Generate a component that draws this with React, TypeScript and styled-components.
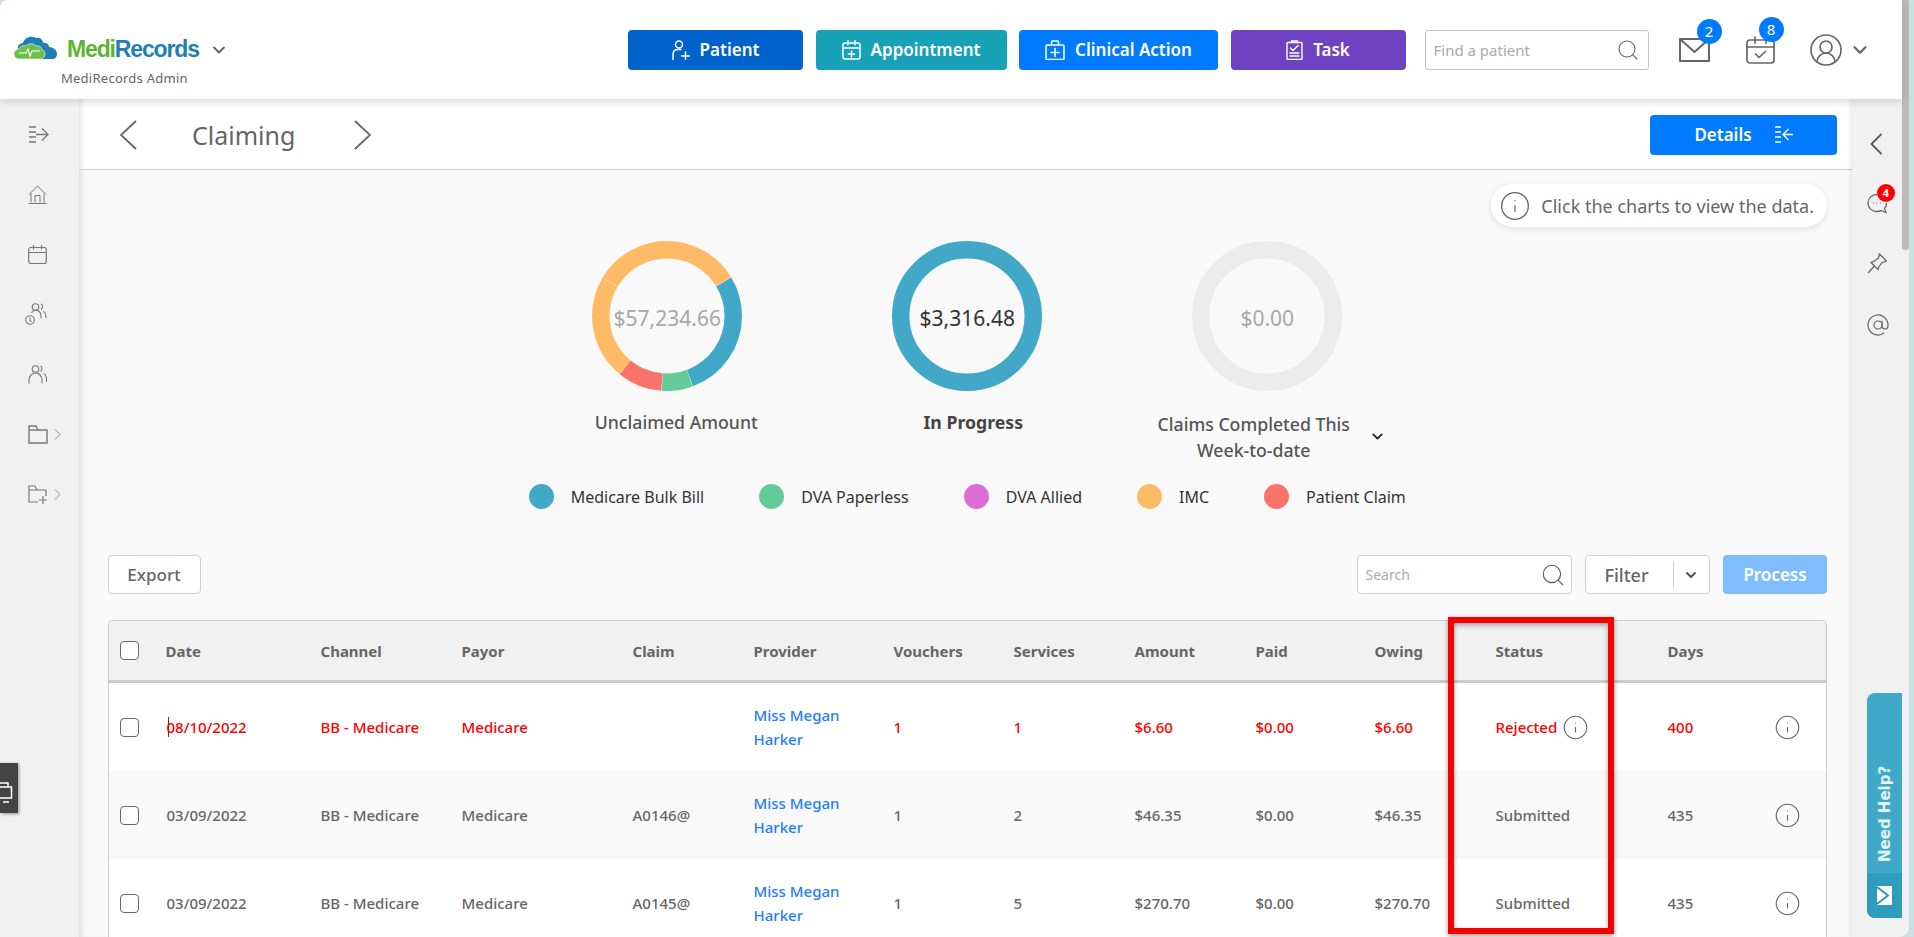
import React from "react";
import styled, { createGlobalStyle } from "styled-components";
import { ChevronDown, Info, Search, CircleUserRound, AtSign } from "lucide-react";

const GlobalStyle = createGlobalStyle`
    html, body {
        margin: 0;
        height: 100%;
        overflow: hidden;
        background: #c9e0e5;
        font-family: "Noto Sans", "Open Sans", sans-serif;
        color: #666;
    }
    * { box-sizing: border-box; }
`;

const Window = styled.div`
    display: flex;
    width: 1909px;
    height: 937px;
    overflow: hidden;
    background: #f1f1f1;
    border-radius: 8px 0 10px 0;
`;

const AppColumn = styled.div`
    display: flex;
    flex-direction: column;
    flex: 1;
    min-width: 0;
`;

const ScrollTrack = styled.div`
    width: 7px;
    background: #f1f1f1;
`;

const ScrollThumb = styled.div`
    height: 250px;
    background: #bcbcbc;
    border-radius: 0 0 3px 3px;
`;

/* top bar */
const TopBar = styled.header`
    position: relative;
    z-index: 3;
    display: flex;
    align-items: center;
    flex: none;
    height: 99px;
    padding: 0 0 0 13px;
    background: #fff;
    box-shadow: 0 2px 8px rgba(0, 0, 0, 0.16);
`;

const BrandBlock = styled.div`
    display: flex;
    flex-direction: column;
    align-self: flex-start;
    flex: none;
    width: 615px;
    padding-top: 32px;
`;

const BrandRow = styled.div`
    display: flex;
    align-items: center;
    height: 30px;
`;

const BrandName = styled.span`
    margin: 5px 0 0 10px;
    font-family: "Liberation Sans", Arial, sans-serif;
    font-size: 23px;
    font-weight: 700;
    letter-spacing: -1.15px;
    color: #1f7fb5;

    b {
        color: #5cb531;
    }
`;

const BrandChevron = styled(ChevronDown)`
    margin: 6px 0 0 10px;
    color: #666;
`;

const BrandSub = styled.span`
    margin: 7px 0 0 48px;
    font-size: 13px;
    line-height: 18px;
    letter-spacing: 0.25px;
    color: #666;
`;

const ActionGroup = styled.div`
    display: flex;
    gap: 12.5px;
`;

const ActionButton = styled.button<{ $bg: string; $width: number }>`
    display: flex;
    align-items: center;
    justify-content: center;
    gap: 10px;
    width: ${({ $width }) => $width}px;
    height: 40px;
    padding: 0;
    border: 0;
    border-radius: 4px;
    background: ${({ $bg }) => $bg};
    color: #fff;
    font-family: inherit;
    font-size: 17px;
    font-weight: 600;
`;

const FindBox = styled.div`
    display: flex;
    align-items: center;
    justify-content: space-between;
    width: 224px;
    height: 40px;
    margin-left: 19px;
    padding: 0 8px;
    border: 1px solid #c4c4c4;
    border-radius: 3px;
    font-size: 15px;
    color: #aaa;
`;

const HeaderIcons = styled.div`
    display: flex;
    align-items: center;
    margin-left: 30px;
`;

const NotifyIcon = styled.div<{ $width: number }>`
    position: relative;
    display: flex;
    width: ${({ $width }) => $width}px;
    color: #666;
`;

const NotifyBadge = styled.span`
    position: absolute;
    top: -19px;
    right: 24px;
    width: 25px;
    height: 25px;
    border-radius: 50%;
    background: #007bff;
    color: #fff;
    font-size: 15px;
    line-height: 25px;
    text-align: center;
`;

const UserChevron = styled(ChevronDown)`
    margin-left: 5px;
    color: #666;
`;

/* rails */
const Workspace = styled.div`
    display: flex;
    flex: 1;
    min-height: 0;
`;

const LeftRail = styled.nav`
    position: relative;
    display: flex;
    flex-direction: column;
    flex: none;
    width: 79px;
    padding: 26px 0 0 28px;
    gap: 41px;
    background: #f1f1f1;
    color: #777;
`;

const RailItem = styled.div<{ $nudge?: number }>`
    display: flex;
    align-items: center;
    height: 19px;
    gap: 6px;
    margin-left: ${({ $nudge }) => $nudge ?? 0}px;
    color: #777;
`;

const DeviceWidget = styled.div`
    position: absolute;
    left: 0;
    top: 664px;
    width: 18px;
    height: 50px;
    background: #444;
    box-shadow: 1px 1px 3px rgba(0, 0, 0, 0.4);
    overflow: hidden;
`;

const RightRail = styled.aside`
    position: relative;
    display: flex;
    flex-direction: column;
    align-items: flex-start;
    flex: none;
    width: 50px;
    padding: 34px 0 0 15px;
    background: #f1f1f1;
    color: #666;
    box-shadow: -2px 0 4px rgba(0, 0, 0, 0.08);
`;

const RailSlot = styled.div<{ $nudge?: number }>`
    position: relative;
    display: flex;
    height: 60px;
    margin-left: ${({ $nudge }) => $nudge ?? 0}px;
`;

const ChatBadge = styled.span`
    position: absolute;
    top: -9px;
    left: 10px;
    width: 18px;
    height: 18px;
    border-radius: 50%;
    background: #f00;
    color: #fff;
    font-size: 11px;
    font-weight: 700;
    line-height: 18px;
    text-align: center;
`;

const HelpTab = styled.div`
    position: absolute;
    left: 15px;
    top: 594px;
    display: flex;
    flex-direction: column;
    width: 35px;
    height: 225px;
    overflow: hidden;
    border-radius: 8px 0 0 8px;
    background: #40a9c8;
`;

const HelpLabel = styled.div`
    display: flex;
    align-items: center;
    justify-content: flex-start;
    flex: 1;
    padding-top: 11px;
    writing-mode: vertical-rl;
    transform: rotate(180deg);
    font-family: "DejaVu Sans", sans-serif;
    font-size: 15px;
    font-weight: 700;
    color: #e4f3f7;
`;

const HelpMail = styled.div`
    display: flex;
    align-items: center;
    justify-content: center;
    flex: none;
    height: 45px;
    background: #2e9cbc;
`;

/* main */
const Main = styled.main`
    display: flex;
    flex-direction: column;
    flex: 1;
    min-width: 0;
    overflow: hidden;
    background: #f9f9f9;
    box-shadow: inset 6px 0 6px -4px rgba(0, 0, 0, 0.12);
`;

const TitleBar = styled.div`
    display: flex;
    align-items: center;
    flex: none;
    height: 71px;
    padding: 1px 15px 0 41px;
    background: #fff;
    border-bottom: 1px solid #ccc;
    box-shadow: inset 6px 0 6px -4px rgba(0, 0, 0, 0.12);
`;

const PageTitle = styled.h1`
    width: 104px;
    margin: 0 58px 0 55px;
    font-size: 25px;
    font-weight: 400;
    color: #666;
`;

const DetailsButton = styled.button`
    display: flex;
    align-items: center;
    justify-content: center;
    gap: 22px;
    width: 187px;
    height: 40px;
    margin-left: auto;
    padding: 0;
    border: 0;
    border-radius: 4px;
    background: #007bff;
    color: #fff;
    font-family: inherit;
    font-size: 17px;
    font-weight: 600;
`;

const Content = styled.div`
    display: flex;
    flex-direction: column;
    flex: 1;
    padding: 14px 25px 0 28.5px;
`;

const HintPill = styled.div`
    display: flex;
    align-items: center;
    align-self: flex-end;
    gap: 10px;
    height: 43px;
    padding: 0 13px 0 8px;
    border-radius: 22px;
    background: #fff;
    box-shadow: 0 2px 6px rgba(0, 0, 0, 0.1);
    font-size: 18px;
    color: #666;
`;

const ChartRow = styled.div`
    display: flex;
    justify-content: center;
    margin-top: 14px;
`;

const ChartItem = styled.div`
    display: flex;
    flex-direction: column;
    align-items: center;
    width: 300px;
`;

const Ring = styled.div`
    position: relative;
    width: 150px;
    height: 150px;

    svg {
        display: block;
    }
`;

const RingValue = styled.span<{ $dark?: boolean }>`
    position: absolute;
    inset: 0;
    display: flex;
    align-items: center;
    justify-content: center;
    padding-top: 3px;
    font-size: 21px;
    color: ${({ $dark }) => ($dark ? "#333" : "#a8a8a8")};
`;

const ChartLabel = styled.div<{ $shift: number; $strong?: boolean }>`
    display: flex;
    align-items: center;
    margin: 18px 0 0 ${({ $shift }) => $shift}px;
    font-size: 17.7px;
    line-height: 26px;
    font-weight: ${({ $strong }) => ($strong ? 700 : 500)};
    color: ${({ $strong }) => ($strong ? "#444" : "#555")};
    text-align: center;
`;

const LabelText = styled.span`
    width: 210px;
    padding-top: 2px;
`;

const LabelChevron = styled(ChevronDown)`
    flex: none;
    margin-left: 10px;
    color: #222;
`;

const Legend = styled.div`
    display: flex;
    justify-content: center;
    gap: 55px;
    margin-top: 21px;
`;

const LegendItem = styled.div`
    display: flex;
    align-items: center;
    gap: 17px;
    height: 25px;
    font-size: 16px;
    color: #333;
`;

const LegendDot = styled.span<{ $color: string }>`
    width: 25px;
    height: 25px;
    border-radius: 50%;
    background: ${({ $color }) => $color};
`;

const TableTools = styled.div`
    display: flex;
    align-items: stretch;
    height: 39px;
    margin-top: 46px;
`;

const ExportButton = styled.button`
    width: 93px;
    padding: 0;
    border: 1px solid #d2d2d2;
    border-radius: 4px;
    background: #fff;
    color: #666;
    font-family: inherit;
    font-size: 17px;
    font-weight: 500;
`;

const SearchBox = styled.div`
    display: flex;
    align-items: center;
    justify-content: space-between;
    width: 215px;
    margin-left: auto;
    padding: 0 5px 0 8px;
    border: 1px solid #d2d2d2;
    border-radius: 4px;
    background: #fff;
    font-size: 14px;
    color: #aaa;
`;

const FilterButton = styled.div`
    display: flex;
    align-items: center;
    width: 125px;
    margin-left: 13px;
    border: 1px solid #d2d2d2;
    border-radius: 4px;
    background: #fff;
    font-size: 18px;
    font-weight: 500;
    color: #666;
`;

const FilterText = styled.span`
    width: 87px;
    padding-left: 19px;
`;

const FilterCaret = styled.span`
    display: flex;
    align-items: center;
    justify-content: center;
    flex: 1;
    height: 28px;
    border-left: 1px solid #d2d2d2;
    color: #555;
`;

const ProcessButton = styled.button`
    width: 104px;
    margin-left: 13.5px;
    padding: 0;
    border: 0;
    border-radius: 4px;
    background: #80bdff;
    color: #fff;
    font-family: inherit;
    font-size: 17px;
    font-weight: 600;
`;

const TableWrap = styled.div`
    position: relative;
    margin-top: 26px;
`;

const Table = styled.div`
    border: 1px solid #ccc;
    border-bottom: 0;
    border-radius: 5px 5px 0 0;
    overflow: hidden;
`;

const columns = "57px 155px 141px 171px 121px 140px 120px 121px 121px 119px 121px 172px 106px 1fr";

const HeadRow = styled.div`
    display: grid;
    grid-template-columns: ${columns};
    align-items: center;
    height: 62px;
    background: #f1f1f1;
    border-bottom: 3px solid #ccc;
    font-size: 15px;
    font-weight: 700;
    color: #666;
`;

const BodyRow = styled.div<{ $alert?: boolean; $shaded?: boolean }>`
    display: grid;
    grid-template-columns: ${columns};
    align-items: center;
    height: 88px;
    background: ${({ $shaded }) => ($shaded ? "#f9f9f9" : "#fff")};
    font-size: 15px;
    font-weight: 500;
    color: ${({ $alert }) => ($alert ? "#f00" : "#666")};
`;

const CheckCell = styled.div`
    display: flex;
    padding-left: 11.5px;
`;

const Check = styled.input.attrs({ type: "checkbox" })`
    width: 19px;
    height: 19px;
    margin: 0;
    appearance: none;
    border: 1px solid #666;
    border-radius: 4px;
    background: #fff;
`;

const DateCell = styled.div<{ $caret?: boolean }>`
    position: relative;
    padding-left: 1px;

    &::before {
        content: "";
        display: ${({ $caret }) => ($caret ? "block" : "none")};
        position: absolute;
        left: 2px;
        top: 0;
        bottom: 0;
        width: 1px;
        background: #d00;
    }
`;

const ProviderLink = styled.a`
    display: block;
    max-width: 100px;
    line-height: 24px;
    color: #1f7dff;
`;

const StatusCell = styled.div`
    display: flex;
    align-items: center;
    gap: 5px;
`;

const InfoIcon = styled(Info)`
    color: #666;
`;

const StatusHighlight = styled.div`
    position: absolute;
    left: 1340.5px;
    top: -3px;
    width: 166px;
    height: 317px;
    border: 6px solid #f40000;
    box-shadow: 0 2px 5px rgba(0, 0, 0, 0.4), inset 0 2px 5px rgba(0, 0, 0, 0.35);
    pointer-events: none;
`;

/* drawn icons */
const thin = { fill: "none", stroke: "currentColor", strokeLinecap: "round", strokeLinejoin: "round" } as const;

const LogoMark = () => (
    <svg width="44" height="25" viewBox="0 0 44 25">
        <path d="M6 16c-3-4 0-8 4-8 1-5 8-8 13-5 3-1 7 1 7 5 3-1 6 1 6 4 4 0 8 3 8 7 0 3-2 5-5 5H14C9 24 7 20 6 16z" fill="#1f7fb5" />
        <path d="M1 19c0-3 2-5 5-5 1-3 4-4 7-3 2-3 8-3 10 0 3-1 6 1 6 4 2 0 3 2 3 4 0 3-2 5-5 5H6c-3 0-5-2-5-5z" fill="#6cc04a" stroke="#fff" strokeWidth="0.6" />
        <path d="M6 18h7l2-4 2 7 2-5h8" fill="none" stroke="#fff" strokeWidth="1.1" />
    </svg>
);

const PatientPlus = () => (
    <svg width="18" height="20" viewBox="0 0 18 20" {...thin} strokeWidth={1.5}>
        <circle cx="7" cy="4.5" r="3.5" />
        <path d="M1 19.5v-5c0-3 2-5 5-5h3" />
        <path d="M13.5 12v7.500M9.500 16h8" />
    </svg>
);

const CalendarAdd = () => (
    <svg width="19" height="20" viewBox="0 0 19 20" {...thin} strokeWidth={1.5}>
        <rect x="1" y="3" width="17" height="16" rx="2" />
        <path d="M1 8h17M6 .8v4M13 .8v4M9.500 11v6M6.500 14h6" />
    </svg>
);

const MedicalCase = () => (
    <svg width="20" height="20" viewBox="0 0 20 20" {...thin} strokeWidth={1.5}>
        <rect x="1" y="5" width="18" height="14.500" rx="1" />
        <path d="M6.500 5V2c0-.8.5-1 1-1h5c.5 0 1 .2 1 1v3M10 8.500v8M6 12.500h8" />
    </svg>
);

const ClipboardTask = () => (
    <svg width="17" height="20" viewBox="0 0 17 20" {...thin} strokeWidth={1.4}>
        <rect x="1" y="2.500" width="15" height="17" rx="1" />
        <path d="M5.500 2.500V1h6v1.500M4.500 8l2.500 2.500 5-5M4 13h9M4 16h9" />
    </svg>
);

const MailIcon = () => (
    <svg width="31" height="24" viewBox="0 0 31 24" {...thin} strokeWidth={2}>
        <rect x="1" y="1" width="29" height="22" />
        <path d="M1 1l14.500 13L30 1" />
    </svg>
);

const CalendarTick = () => (
    <svg width="29" height="28" viewBox="0 0 29 28" {...thin} strokeWidth={1.7}>
        <rect x="1" y="4" width="27" height="23" rx="3" />
        <path d="M1 11h27M9 1v6M20 1v6M9.500 18l3.500 3.500 6.500-6" />
    </svg>
);

const ExpandMenu = () => (
    <svg width="21" height="17" viewBox="0 0 21 17" fill="none" stroke="currentColor" strokeWidth="1.3">
        <path d="M1 1h7M1 6h7M1 11h7M1 16h7" />
        <path d="M8 8.500h12M14 2.500l6 6-6 6" />
    </svg>
);

const CollapseMenu = () => (
    <svg width="19" height="17" viewBox="0 0 19 17" fill="none" stroke="#fff" strokeWidth="1.3">
        <path d="M1 1h6M1 6h6M1 11h6M1 16h6" />
        <path d="M19 8.500H9M14.500 3l-5.500 5.500 5.500 5.500" />
    </svg>
);

const HomeIcon = () => (
    <svg width="19" height="19" viewBox="0 0 19 19" fill="none" stroke="currentColor" strokeWidth="1">
        <path d="M1 9.500L9.500 1 18 9.500M3 8.500v9M16 8.500v9M.5 18.500h18M7 17.500v-7h5v7" />
    </svg>
);

const CalendarIcon = () => (
    <svg width="19" height="19" viewBox="0 0 19 19" fill="none" stroke="currentColor" strokeWidth="1.2">
        <rect x=".7" y="2.500" width="17.600" height="16" rx="2" />
        <path d="M.7 7.500h17.600M5.500 0v4.500M13.500 0v4.500" />
    </svg>
);

const PeopleClock = () => (
    <svg width="22" height="23" viewBox="0 0 22 23" fill="none" stroke="currentColor" strokeWidth="1.1">
        <circle cx="10.500" cy="4" r="3.300" />
        <path d="M16 1c2 .5 2 4.500 0 5.500M6.500 10c1-2 2.500-2.800 4.500-2.800 3.500 0 5 3 5 6v2M18 8.500c2 .5 3 2.500 3 5.500v1" />
        <circle cx="5" cy="17" r="4.300" />
        <path d="M5 14.500v3l1.500 1" />
    </svg>
);

const PeopleIcon = () => (
    <svg width="19" height="19" viewBox="0 0 19 19" fill="none" stroke="currentColor" strokeWidth="1.1">
        <circle cx="7.500" cy="4" r="3.300" />
        <path d="M12.500 1c2 .5 2 4.500 0 5.500M1 18.500V15c0-4 3-7 6.500-7s6.500 3 6.500 7v3.500M15.500 8.500c2 1 3 3 3 5.500v3" />
    </svg>
);

const FolderIcon = () => (
    <svg width="20" height="19" viewBox="0 0 20 19" fill="none" stroke="currentColor" strokeWidth="1.4">
        <path d="M1 18V1h7l2 4h9v13z" />
        <path d="M1 5h9" />
    </svg>
);

const FolderAdd = () => (
    <svg width="20" height="19" viewBox="0 0 20 19" fill="none" stroke="currentColor" strokeWidth="1.2">
        <path d="M10 17H1V1h6l2 4h9v6M1 5h8" />
        <path d="M15 11v8M11 15h8" />
    </svg>
);

const TinyChevron = () => (
    <svg width="7" height="11" viewBox="0 0 7 11" fill="none" stroke="#888" strokeWidth="0.9">
        <path d="M1 .5l5 5-5 5" />
    </svg>
);

const DeviceIcon = () => (
    <svg width="18" height="50" viewBox="0 0 18 50" fill="none" stroke="#fff" strokeWidth="1.5">
        <path d="M-2 20H8v4M-2 24h13.500v11H-2M3 39h6" />
    </svg>
);

const PageChevron = ({ flip }: { flip?: boolean }) => (
    <svg width="17" height="30" viewBox="0 0 17 30" fill="none" stroke="#666" strokeWidth="1.8">
        <path d={flip ? "M1 1l15 14L1 29" : "M16 1L1 15l15 14"} />
    </svg>
);

const SideChevron = () => (
    <svg width="12" height="22" viewBox="0 0 12 22" fill="none" stroke="#555" strokeWidth="1.8">
        <path d="M11.500 1L1.500 11l10 10" />
    </svg>
);

const ChatIcon = () => (
    <svg width="20" height="21" viewBox="0 0 20 21" fill="none" stroke="currentColor" strokeWidth="1.3">
        <path d="M10 1.500c-5 0-9 3.500-9 8.500s4 8.500 9 8.500c2 0 3 0 4-1l5 2-1.500-4c1.500-1.500 2-3.500 2-5.500" />
        <path d="M6 10h.6M9.500 10h.6M13 10h.6" />
    </svg>
);

const PinIcon = () => (
    <svg width="20" height="21" viewBox="0 0 20 21" fill="none" stroke="currentColor" strokeWidth="1.3">
        <path d="M12.500 1L19.500 8 15 9.500 11.500 14.500 11 16.500 4 9.500l2.500-.8 5-3.700z" />
        <path d="M7.500 13L1 20" />
    </svg>
);

const HelpEnvelope = () => (
    <svg width="15" height="19" viewBox="0 0 15 19">
        <path d="M0 0h15v19H0z" fill="#fff" />
        <path d="M0 1l11 8.500L0 18" fill="none" stroke="#2e9cbc" strokeWidth="2" />
    </svg>
);

type Slice = { color: string; from: number; to: number };

const Donut = ({ slices }: { slices: Slice[] }) => (
    <svg width="150" height="150" viewBox="0 0 150 150">
        {slices.map((s) => (
            <circle
                key={s.from}
                cx="75"
                cy="75"
                r="66.25"
                fill="none"
                stroke={s.color}
                strokeWidth="17.5"
                pathLength={360}
                strokeDasharray={`${s.to - s.from - (s.to === 360 ? 0 : 0.3)} 360`}
                strokeDashoffset={-s.from}
                transform="rotate(-90 75 75)"
            />
        ))}
    </svg>
);

const BLUE = "#41a8c8";
const GREEN = "#63cb97";
const PURPLE = "#d96fd6";
const AMBER = "#feba65";
const CORAL = "#f8736a";

const unclaimed: Slice[] = [
    { color: AMBER, from: 0, to: 59 },
    { color: BLUE, from: 59, to: 160 },
    { color: GREEN, from: 160, to: 184.5 },
    { color: CORAL, from: 184.5, to: 219.5 },
    { color: AMBER, from: 219.5, to: 301 },
    { color: AMBER, from: 301, to: 360 },
];

const legend = [
    { label: "Medicare Bulk Bill", color: BLUE },
    { label: "DVA Paperless", color: GREEN },
    { label: "DVA Allied", color: PURPLE },
    { label: "IMC", color: AMBER },
    { label: "Patient Claim", color: CORAL },
];

const headings = ["Date", "Channel", "Payor", "Claim", "Provider", "Vouchers", "Services", "Amount", "Paid", "Owing", "Status", "Days"];

const claims = [
    { date: "08/10/2022", claim: "", vouchers: 1, services: 1, amount: "$6.60", owing: "$6.60", status: "Rejected", days: 400, alert: true },
    { date: "03/09/2022", claim: "A0146@", vouchers: 1, services: 2, amount: "$46.35", owing: "$46.35", status: "Submitted", days: 435 },
    { date: "03/09/2022", claim: "A0145@", vouchers: 1, services: 5, amount: "$270.70", owing: "$270.70", status: "Submitted", days: 435 },
];

const App = () => (
    <>
        <GlobalStyle />
        <Window>
            <AppColumn>
                <TopBar>
                    <BrandBlock>
                        <BrandRow>
                            <LogoMark />
                            <BrandName>
                                <b>Medi</b>Records
                            </BrandName>
                            <BrandChevron size={20} strokeWidth={2.4} />
                        </BrandRow>
                        <BrandSub>MediRecords Admin</BrandSub>
                    </BrandBlock>
                    <ActionGroup>
                        <ActionButton $bg="#0062cc" $width={175}>
                            <PatientPlus />
                            Patient
                        </ActionButton>
                        <ActionButton $bg="#17a2b8" $width={191}>
                            <CalendarAdd />
                            Appointment
                        </ActionButton>
                        <ActionButton $bg="#007bff" $width={199}>
                            <MedicalCase />
                            Clinical Action
                        </ActionButton>
                        <ActionButton $bg="#6f42c1" $width={175}>
                            <ClipboardTask />
                            Task
                        </ActionButton>
                    </ActionGroup>
                    <FindBox>
                        Find a patient
                        <Search size={24} strokeWidth={1.1} color="#666" />
                    </FindBox>
                    <HeaderIcons>
                        <NotifyIcon $width={67}>
                            <MailIcon />
                            <NotifyBadge>2</NotifyBadge>
                        </NotifyIcon>
                        <NotifyIcon $width={62}>
                            <CalendarTick />
                            <NotifyBadge>8</NotifyBadge>
                        </NotifyIcon>
                        <CircleUserRound size={36} strokeWidth={1.1} color="#666" />
                        <UserChevron size={22} strokeWidth={2.4} />
                    </HeaderIcons>
                </TopBar>
                <Workspace>
                    <LeftRail>
                        <RailItem>
                            <ExpandMenu />
                        </RailItem>
                        <RailItem>
                            <HomeIcon />
                        </RailItem>
                        <RailItem>
                            <CalendarIcon />
                        </RailItem>
                        <RailItem $nudge={-3}>
                            <PeopleClock />
                        </RailItem>
                        <RailItem>
                            <PeopleIcon />
                        </RailItem>
                        <RailItem>
                            <FolderIcon />
                            <TinyChevron />
                        </RailItem>
                        <RailItem>
                            <FolderAdd />
                            <TinyChevron />
                        </RailItem>
                        <DeviceWidget>
                            <DeviceIcon />
                        </DeviceWidget>
                    </LeftRail>
                    <Main>
                        <TitleBar>
                            <PageChevron />
                            <PageTitle>Claiming</PageTitle>
                            <PageChevron flip />
                            <DetailsButton>
                                Details
                                <CollapseMenu />
                            </DetailsButton>
                        </TitleBar>
                        <Content>
                            <HintPill>
                                <Info size={32} strokeWidth={1} color="#666" />
                                Click the charts to view the data.
                            </HintPill>
                            <ChartRow>
                                <ChartItem>
                                    <Ring>
                                        <Donut slices={unclaimed} />
                                        <RingValue>$57,234.66</RingValue>
                                    </Ring>
                                    <ChartLabel $shift={18}>Unclaimed Amount</ChartLabel>
                                </ChartItem>
                                <ChartItem>
                                    <Ring>
                                        <Donut slices={[{ color: BLUE, from: 0, to: 360 }]} />
                                        <RingValue $dark>$3,316.48</RingValue>
                                    </Ring>
                                    <ChartLabel $shift={12} $strong>
                                        In Progress
                                    </ChartLabel>
                                </ChartItem>
                                <ChartItem>
                                    <Ring>
                                        <Donut slices={[{ color: "#ececec", from: 0, to: 360 }]} />
                                        <RingValue>$0.00</RingValue>
                                    </Ring>
                                    <ChartLabel $shift={0}>
                                        <LabelText>Claims Completed This Week-to-date</LabelText>
                                        <LabelChevron size={17} strokeWidth={2.6} />
                                    </ChartLabel>
                                </ChartItem>
                            </ChartRow>
                            <Legend>
                                {legend.map((item) => (
                                    <LegendItem key={item.label}>
                                        <LegendDot $color={item.color} />
                                        {item.label}
                                    </LegendItem>
                                ))}
                            </Legend>
                            <TableTools>
                                <ExportButton>Export</ExportButton>
                                <SearchBox>
                                    Search
                                    <Search size={26} strokeWidth={1} color="#555" />
                                </SearchBox>
                                <FilterButton>
                                    <FilterText>Filter</FilterText>
                                    <FilterCaret>
                                        <ChevronDown size={16} strokeWidth={3} />
                                    </FilterCaret>
                                </FilterButton>
                                <ProcessButton>Process</ProcessButton>
                            </TableTools>
                            <TableWrap>
                                <Table>
                                    <HeadRow>
                                        <CheckCell>
                                            <Check readOnly />
                                        </CheckCell>
                                        {headings.map((h) => (
                                            <div key={h}>{h}</div>
                                        ))}
                                    </HeadRow>
                                    {claims.map((c, i) => (
                                        <BodyRow key={c.claim + i} $alert={c.alert} $shaded={i % 2 === 1}>
                                            <CheckCell>
                                                <Check readOnly />
                                            </CheckCell>
                                            <DateCell $caret={c.alert}>{c.date}</DateCell>
                                            <div>BB - Medicare</div>
                                            <div>Medicare</div>
                                            <div>{c.claim}</div>
                                            <ProviderLink>Miss Megan Harker</ProviderLink>
                                            <div>{c.vouchers}</div>
                                            <div>{c.services}</div>
                                            <div>{c.amount}</div>
                                            <div>$0.00</div>
                                            <div>{c.owing}</div>
                                            <StatusCell>
                                                {c.status}
                                                {c.alert && <InfoIcon size={27} strokeWidth={1} />}
                                            </StatusCell>
                                            <div>{c.days}</div>
                                            <InfoIcon size={27} strokeWidth={1} />
                                        </BodyRow>
                                    ))}
                                </Table>
                                <StatusHighlight />
                            </TableWrap>
                        </Content>
                    </Main>
                    <RightRail>
                        <RailSlot $nudge={3}>
                            <SideChevron />
                        </RailSlot>
                        <RailSlot>
                            <ChatIcon />
                            <ChatBadge>4</ChatBadge>
                        </RailSlot>
                        <RailSlot>
                            <PinIcon />
                        </RailSlot>
                        <RailSlot $nudge={-1}>
                            <AtSign size={24} strokeWidth={1.2} />
                        </RailSlot>
                        <HelpTab>
                            <HelpLabel>Need Help?</HelpLabel>
                            <HelpMail>
                                <HelpEnvelope />
                            </HelpMail>
                        </HelpTab>
                    </RightRail>
                </Workspace>
            </AppColumn>
            <ScrollTrack>
                <ScrollThumb />
            </ScrollTrack>
        </Window>
    </>
);

export default App;
